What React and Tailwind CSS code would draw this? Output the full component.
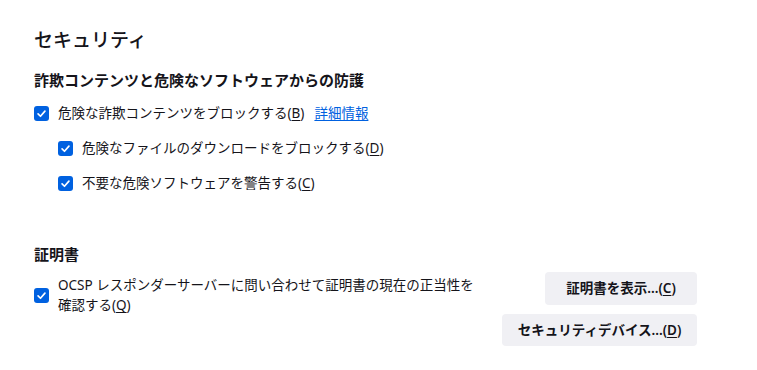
import React from 'react';

const Check = () => (
    <span className="flex h-[15px] w-[15px] shrink-0 items-center justify-center rounded-[3px] bg-[#0061e0]">
        <svg viewBox="0 0 16 16" className="h-[11px] w-[11px]" fill="none">
            <path d="M3 8.5 6.5 12 13 4.5" stroke="white" strokeWidth="2.4" strokeLinecap="round" strokeLinejoin="round" />
        </svg>
    </span>
);

const Key = ({ k }) => (
    <span>(<span className="underline underline-offset-2">{k}</span>)</span>
);

const Row = ({ children, indent }) => (
    <label className={`flex h-[24px] items-center gap-[9px] ${indent ? 'pl-[24px]' : ''}`}>
        <Check />
        <span>{children}</span>
    </label>
);

export default function App() {
    return (
        <div
            className="min-h-screen bg-white pl-[34px] pr-[60px] pt-[26px] text-[13.5px] text-[#15141a]"
            style={{ fontFamily: '"Noto Sans", "Noto Sans CJK JP", sans-serif' }}
        >
            <h1 className="text-[19px] leading-[28px] font-medium">セキュリティ</h1>

            <h2 className="mt-[15px] text-[15px] leading-[22px] font-semibold">詐欺コンテンツと危険なソフトウェアからの防護</h2>

            <div className="mt-[10px] flex flex-col gap-[11px]">
                <Row>
                    危険な詐欺コンテンツをブロックする<Key k="B" />
                    <a className="ml-[10px] text-[#0061e0] underline underline-offset-2">詳細情報</a>
                </Row>
                <Row indent>
                    危険なファイルのダウンロードをブロックする<Key k="D" />
                </Row>
                <Row indent>
                    不要な危険ソフトウェアを警告する<Key k="C" />
                </Row>
            </div>

            <h2 className="mt-[48px] text-[15px] leading-[22px] font-semibold">証明書</h2>

            <div className="mt-[7px] flex items-start justify-between">
                <div className="mt-[3px] flex items-center gap-[9px]">
                    <Check />
                    <p className="max-w-[425px] leading-[20px]">
                        OCSP レスポンダーサーバーに問い合わせて証明書の現在の正当性を確認する<Key k="Q" />
                    </p>
                </div>
                <div className="flex flex-col items-end gap-[9px]">
                    <button className="h-[33px] w-[152px] whitespace-nowrap rounded-[4px] bg-[#f0f0f4] font-semibold">
                        証明書を表示...<Key k="C" />
                    </button>
                    <button className="h-[32px] w-[195px] whitespace-nowrap rounded-[4px] bg-[#f0f0f4] font-semibold">
                        セキュリティデバイス...<Key k="D" />
                    </button>
                </div>
            </div>
        </div>
    );
}
